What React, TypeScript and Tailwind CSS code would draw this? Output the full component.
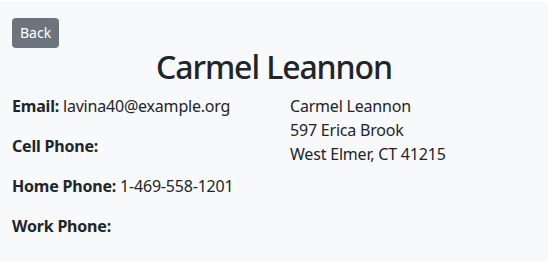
export default function App() {
  const rows = [
    { label: "Email:", value: "lavina40@example.org" },
    { label: "Cell Phone:", value: "" },
    { label: "Home Phone:", value: "1-469-558-1201" },
    { label: "Work Phone:", value: "" },
  ];

  return (
    <div
      className="min-h-screen border-t-2 border-white bg-[#f8f9fa] text-[#212529]"
      style={{ fontFamily: '"Noto Sans", sans-serif' }}
    >
      <div className="px-3 pt-4">
        <button className="flex h-[30px] items-center rounded bg-[#6c757d] px-2 text-sm text-white">
          Back
        </button>
        <h2 className="mb-2 text-center text-[32px] font-medium leading-[1.2] tracking-[-1.1px]">
          Carmel Leannon
        </h2>
        <div className="grid grid-cols-[278px_1fr] tracking-[-0.2px]">
          <div>
            {rows.map((r) => (
              <p key={r.label} className="mb-4 text-base leading-6">
                <span className="font-bold">{r.label}</span> {r.value}
              </p>
            ))}
          </div>
          <div className="text-base leading-6">
            <div>Carmel Leannon</div>
            <div>597 Erica Brook</div>
            <div>West Elmer, CT 41215</div>
          </div>
        </div>
      </div>
    </div>
  );
}
